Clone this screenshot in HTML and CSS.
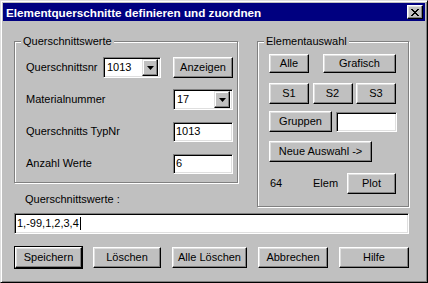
FILE: index.html
```html
<!DOCTYPE html>
<html lang="de">
<head>
    <meta charset="UTF-8">
    <title>Elementquerschnitte definieren und zuordnen</title>
    <link rel="stylesheet" href="styles.css">
</head>
<body>
<div class="window">
    <div class="titlebar">
        <span class="title">Elementquerschnitte definieren und zuordnen</span>
        <button class="close">
            <svg width="8" height="7" viewBox="0 0 8 7"><path d="M0 0h2l2 2.5L6 0h2L5 3.5 8 7H6L4 4.5 2 7H0l3-3.5z"/></svg>
        </button>
    </div>
    <div class="content">
        <div class="top">
            <div class="left-col">
                <fieldset class="group group-werte">
                    <legend>Querschnittswerte</legend>
                    <div class="werte-grid">
                        <label>Querschnittsnr</label>
                        <div class="combo combo-nr">
                            <span class="combo-value">1013</span>
                            <span class="combo-btn"><svg width="7" height="4" viewBox="0 0 7 4"><path d="M0 0h7L3.5 4z"/></svg></span>
                        </div>
                        <button class="btn btn-anzeigen">Anzeigen</button>

                        <label class="wide-label">Materialnummer</label>
                        <div class="combo combo-mat">
                            <span class="combo-value">17</span>
                            <span class="combo-btn"><svg width="7" height="4" viewBox="0 0 7 4"><path d="M0 0h7L3.5 4z"/></svg></span>
                        </div>

                        <label class="wide-label">Querschnitts TypNr</label>
                        <div class="field field-small">1013</div>

                        <label class="wide-label">Anzahl Werte</label>
                        <div class="field field-small">6</div>
                    </div>
                </fieldset>
                <div class="werte-label">Querschnittswerte :</div>
            </div>

            <fieldset class="group group-auswahl">
                <legend>Elementauswahl</legend>
                <div class="row row-1">
                    <button class="btn btn-alle">Alle</button>
                    <button class="btn btn-grafisch">Grafisch</button>
                </div>
                <div class="row row-2">
                    <button class="btn btn-s">S1</button>
                    <button class="btn btn-s">S2</button>
                    <button class="btn btn-s">S3</button>
                </div>
                <div class="row row-3">
                    <button class="btn btn-gruppen">Gruppen</button>
                    <div class="field field-gruppe"></div>
                </div>
                <div class="row row-4">
                    <button class="btn btn-neue">Neue Auswahl -&gt;</button>
                </div>
                <div class="row row-5">
                    <span class="count">64</span>
                    <span class="elem">Elem</span>
                    <button class="btn btn-plot">Plot</button>
                </div>
            </fieldset>
        </div>

        <div class="field field-werte">1,-99,1,2,3,4<span class="caret"></span></div>

        <div class="actions">
            <button class="btn btn-default btn-speichern">Speichern</button>
            <button class="btn btn-loeschen">Löschen</button>
            <button class="btn btn-alleloeschen">Alle Löschen</button>
            <button class="btn btn-abbrechen">Abbrechen</button>
            <button class="btn btn-hilfe">Hilfe</button>
        </div>
    </div>
</div>
</body>
</html>
```

FILE: styles.css
```css
* {
    box-sizing: border-box;
}
body {
    margin: 0;
    background: #c0c0c0;
    font: 11px/13px "Liberation Sans", Arial, sans-serif;
    color: #000;
}
.window {
    width: 428px;
    height: 283px;
    background: #c0c0c0;
    border: 1px solid;
    border-color: #dfdfdf #000 #000 #dfdfdf;
    box-shadow: inset 1px 1px #fff, inset -1px -1px #808080;
    padding: 2px;
}
.titlebar {
    height: 18px;
    background: #000080;
    color: #fff;
    display: flex;
    align-items: center;
    justify-content: space-between;
    padding: 0 2px 0 3px;
}
.title {
    font-weight: bold;
    font-size: 11.7px;
}
.close {
    width: 16px;
    height: 14px;
    padding: 0;
    background: #c0c0c0;
    border: 1px solid;
    border-color: #fff #000 #000 #fff;
    box-shadow: inset -1px -1px #808080, inset 1px 1px #dfdfdf;
    display: flex;
    align-items: center;
    justify-content: center;
}
.close svg {
    display: block;
    shape-rendering: crispEdges;
}
.content {
    padding: 14px 0 0 11px;
}
.top {
    display: flex;
    align-items: flex-start;
    gap: 19px;
}

/* group boxes */
.group {
    margin: 0;
    min-width: 0;
    border: 1px solid #808080;
    box-shadow: inset 1px 1px #fff, 1px 1px #fff;
}
.group legend {
    padding: 0 2px;
    margin-left: -5px;
    line-height: 13px;
    background: #c0c0c0;
}
.group-werte {
    width: 224px;
    padding: 9px 4px 8px 11px;
}
.group-auswahl {
    width: 152px;
    padding: 6px 0 12px 11px;
}
.werte-grid {
    display: grid;
    grid-template-columns: 77px 70px 60px;
    grid-auto-rows: 21px;
    row-gap: 11px;
    align-items: center;
}
.wide-label {
    grid-column: 1 / 3;
}
.werte-label {
    margin: 10px 0 0 11px;
}

/* controls */
.btn {
    height: 21px;
    padding: 0;
    font: inherit;
    color: #000;
    background: #c0c0c0;
    border: 1px solid;
    border-color: #fff #000 #000 #fff;
    box-shadow: inset -1px -1px #808080, inset 1px 1px #dfdfdf;
}
.btn-default {
    outline: 1px solid #000;
}
.field {
    height: 20px;
    background: #fff;
    border: 1px solid;
    border-color: #808080 #fff #fff #808080;
    box-shadow: inset 1px 1px #000, inset -1px -1px #dfdfdf;
    padding: 0 2px;
    display: flex;
    align-items: center;
}
.field-small {
    width: 60px;
}
.combo {
    height: 21px;
    background: #fff;
    border: 1px solid;
    border-color: #808080 #fff #fff #808080;
    box-shadow: inset 1px 1px #000, inset -1px -1px #dfdfdf;
    padding: 2px;
    display: flex;
    align-items: center;
}
.combo-nr {
    width: 58px;
}
.combo-mat {
    width: 60px;
}
.combo-value {
    flex: 1;
    padding-left: 1px;
}
.combo-btn {
    width: 16px;
    height: 17px;
    background: #c0c0c0;
    border: 1px solid;
    border-color: #dfdfdf #000 #000 #dfdfdf;
    box-shadow: inset -1px -1px #808080, inset 1px 1px #fff;
    display: flex;
    align-items: center;
    justify-content: center;
}
.combo-btn svg {
    display: block;
}
.btn-anzeigen {
    width: 60px;
}

/* element selection */
.row {
    display: flex;
    align-items: center;
}
.row-1 {
    gap: 14px;
}
.row-1 .btn {
    height: 19px;
}
.btn-alle {
    width: 40px;
}
.btn-grafisch {
    width: 73px;
}
.row-2 {
    margin-top: 10px;
    width: 127px;
    justify-content: space-between;
}
.btn-s {
    width: 40px;
}
.row-3 {
    margin-top: 7px;
    gap: 4px;
}
.btn-gruppen {
    width: 63px;
}
.field-gruppe {
    width: 61px;
}
.row-4 {
    margin-top: 9px;
}
.btn-neue {
    width: 103px;
}
.row-5 {
    margin-top: 11px;
}
.count {
    width: 44px;
    padding-left: 1px;
}
.elem {
    width: 34px;
}
.btn-plot {
    width: 49px;
}

/* bottom */
.field-werte {
    width: 395px;
    height: 21px;
    margin-top: 6px;
}
.caret {
    width: 1px;
    height: 13px;
    background: #000;
    margin-left: 1px;
}
.actions {
    display: flex;
    gap: 11px;
    margin-top: 13px;
    padding-left: 1px;
}
.btn-speichern {
    width: 67px;
}
.btn-loeschen {
    width: 68px;
}
.btn-alleloeschen {
    width: 75px;
}
.btn-abbrechen,
.btn-hilfe {
    width: 70px;
}
```
